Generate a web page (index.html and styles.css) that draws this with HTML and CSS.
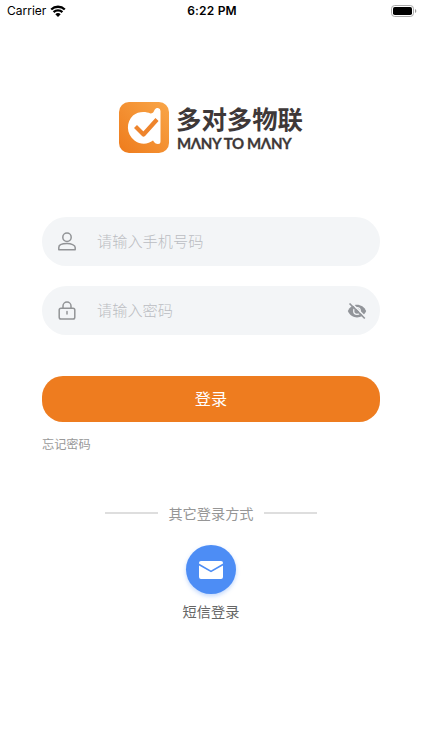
FILE: index.html
```
<!DOCTYPE html>
<html lang="zh-CN">
<head>
    <meta charset="UTF-8">
    <meta name="viewport" content="width=device-width, initial-scale=1.0">
    <title>登录</title>
    <link rel="stylesheet" href="styles.css">
</head>
<body>
    <div class="status-bar">
        <div class="carrier">
            <span>Carrier</span>
            <svg width="16" height="12" viewBox="0 0 16 12">
                <path d="M1.200 4.500a9.800 9.800 0 0 1 13.600 0M3.600 7.100a6.300 6.300 0 0 1 8.800 0" fill="none" stroke="#000" stroke-width="2.300"/>
                <path d="M8 12 5.300 9.200a3.900 3.900 0 0 1 5.400 0z"/>
            </svg>
        </div>
        <div class="time">6:22 PM</div>
        <div class="battery">
            <svg width="26" height="12" viewBox="0 0 26 12">
                <rect x=".5" y=".5" width="22" height="11" rx="3.200" fill="#fff" stroke="#aaa"/>
                <rect x="2" y="2" width="19" height="8" rx="1.800"/>
                <path d="M24 4v4c1.800-.6 1.800-3.400 0-4z" fill="#999"/>
            </svg>
        </div>
    </div>

    <div class="logo">
        <svg class="logo-icon" width="50" height="51" viewBox="0 0 50 51">
            <defs>
                <linearGradient id="orange" x1="1" y1="0" x2="0" y2="1">
                    <stop offset="0" stop-color="#f9a648"/>
                    <stop offset="1" stop-color="#ee7b1c"/>
                </linearGradient>
            </defs>
            <rect width="50" height="51" rx="10" fill="url(#orange)"/>
            <path d="M31.500 11.500C33.500 11.500 34.500 10.500 35 9C36 6.500 37.500 6 39 6Q41.500 6.300 41.500 9V39.500Q41.500 42 39 42Q36 42 34 38.500C29 42.500 21.500 43 15.500 38.500C7 32 7 20 14 13.500C19 9.500 26 9 31.500 11.500z" fill="#fff"/>
            <path d="M16.500 24.500 24.500 32.500 38 17.500" fill="none" stroke="#ee842c" stroke-width="4.200" stroke-linejoin="round"/>
        </svg>
        <div class="logo-text">
            <div class="logo-name">多对多物联</div>
            <div class="logo-sub">MΛNY TO MΛNY</div>
        </div>
    </div>

    <form class="login-form">
        <label class="field">
            <svg class="field-icon" width="20" height="20" viewBox="0 0 20 20">
                <circle cx="10" cy="5.300" r="4.200"/>
                <path d="M1.800 17.800v-2.300c0-5.200 16.400-5.200 16.400 0V17.800z"/>
            </svg>
            <input type="tel" placeholder="请输入手机号码">
        </label>
        <label class="field">
            <svg class="field-icon" width="20" height="20" viewBox="0 0 20 20">
                <rect x="2.200" y="7.200" width="15.600" height="10.800" rx="1.800"/>
                <path d="M6 7V5a4 4 0 0 1 8 0v2M10 10.500v2.500"/>
            </svg>
            <input type="password" placeholder="请输入密码">
            <svg class="eye" width="20" height="18" viewBox="0 0 20 18">
                <path d="M.8 9C4.500 .5 15.500 .5 19.200 9C15.500 17.500 4.500 17.500 .8 9z" fill="#92959a"/>
                <circle cx="10" cy="9" r="3.300" fill="none" stroke="#f3f5f7" stroke-width="1.300"/>
                <path d="M4 .5 19 15.500" stroke="#f3f5f7" stroke-width="1.600"/>
                <path d="M2.500 1.500 17.800 16.500" stroke="#92959a" stroke-width="1.700"/>
            </svg>
        </label>
        <button type="button" class="login-btn">登录</button>
        <a class="forgot">忘记密码</a>
    </form>

    <div class="divider">其它登录方式</div>

    <div class="sms">
        <div class="sms-icon">
            <svg width="24" height="18" viewBox="0 0 24 18">
                <path d="M0 2.500V2Q0 0 2 0H22Q24 0 24 2V2.500L12 9.500z" fill="#fff"/>
                <path d="M0 4.500 12 11.300 24 4.500V16Q24 18 22 18H2Q0 18 0 16z" fill="#fff"/>
            </svg>
        </div>
        <span>短信登录</span>
    </div>
</body>
</html>
```

FILE: styles.css
```
* {
    box-sizing: border-box;
}
body {
    margin: 0;
    background: #fff;
    font-family: "Noto Sans CJK SC", sans-serif;
    height: 750px;
    overflow: hidden;
}
svg {
    display: block;
    flex-shrink: 0;
}
.status-bar {
    display: grid;
    grid-template-columns: 1fr auto 1fr;
    align-items: center;
    height: 21px;
    padding: 0 5px 0 7px;
    font-family: Inter, sans-serif;
    font-size: 12px;
    color: #000;
}
.carrier {
    display: flex;
    align-items: center;
    gap: 4px;
}
.time {
    font-weight: 600;
    letter-spacing: 0.2px;
}
.battery {
    justify-self: end;
}
.logo {
    display: flex;
    gap: 7px;
    padding: 81px 0 0 119px;
}
.logo-text {
    color: #3e3838;
    white-space: nowrap;
}
.logo-name {
    font-size: 25.4px;
    font-weight: 700;
    line-height: 32px;
}
.logo-sub {
    padding-left: 1px;
    font-family: Lato, sans-serif;
    font-size: 15px;
    font-weight: 700;
    line-height: 18px;
    letter-spacing: -0.35px;
    -webkit-text-stroke: 0.3px #3e3838;
}
.login-form {
    display: flex;
    flex-direction: column;
    padding: 64px 42px 0;
}
.field {
    display: flex;
    align-items: center;
    height: 49px;
    margin-bottom: 20px;
    padding: 0 13px 0 15px;
    border-radius: 25px;
    background: #f3f5f7;
}
.field-icon {
    fill: none;
    stroke: #929497;
    stroke-width: 1.5;
    stroke-linejoin: round;
    stroke-linecap: round;
}
.field input {
    flex: 1;
    min-width: 0;
    margin-left: 20px;
    padding: 0 0 3px;
    border: none;
    outline: none;
    background: none;
    font-family: inherit;
    font-size: 15.2px;
    font-weight: 300;
}
.field input::placeholder {
    color: #bbbdc2;
}
.login-btn {
    height: 46px;
    margin-top: 21px;
    padding: 0 0 2px;
    border: none;
    border-radius: 21px;
    background: #ee7c1f;
    color: #fff;
    font-family: inherit;
    font-size: 16.2px;
}
.forgot {
    margin-top: 12px;
    color: #999;
    font-size: 12.2px;
    line-height: 20px;
}
.divider {
    display: flex;
    align-items: center;
    justify-content: center;
    gap: 10px;
    margin-top: 49px;
    color: #969696;
    font-size: 14.2px;
    line-height: 20px;
}
.divider::before,
.divider::after {
    content: "";
    width: 53px;
    height: 2px;
    background: #dedede;
}
.sms {
    display: flex;
    flex-direction: column;
    align-items: center;
    margin-top: 22px;
    color: #666;
    font-size: 14.2px;
    line-height: 20px;
}
.sms-icon {
    display: flex;
    align-items: center;
    justify-content: center;
    width: 50px;
    height: 49px;
    margin-bottom: 7px;
    border-radius: 50%;
    background: #4d8df5;
    box-shadow: 0 2px 4px rgba(77, 141, 245, 0.35);
}
```
